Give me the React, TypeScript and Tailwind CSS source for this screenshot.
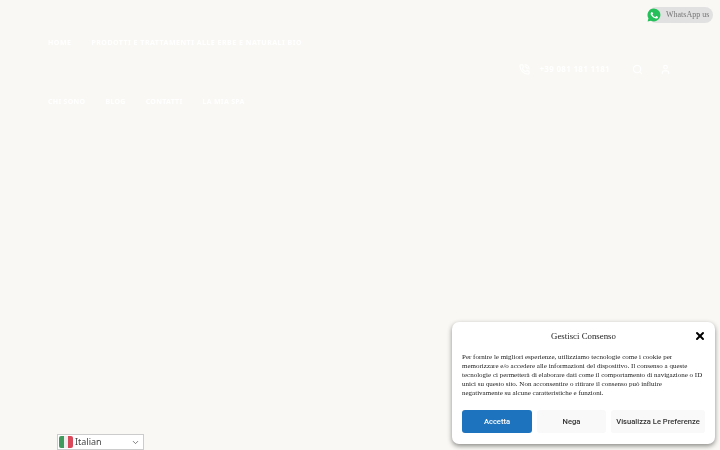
import React from 'react';
import { X, ChevronDown, Search, User, PhoneCall } from 'lucide-react';

const serif = "[font-family:'Liberation_Serif',serif]";

function WhatsAppIcon() {
  return (
    <svg viewBox="0 0 24 24" className="w-[16px] h-[16px]" fill="#fff">
      <path d="M12 2.2a9.7 9.7 0 0 0-8.3 14.7L2.4 21.800l5-1.300A9.700 9.700 0 1 0 12 2.200z" fill="#25c05a" />
      <path d="M8.700 6.900c-.3 0-.7.100-1 .5-.4.400-1.200 1.200-1.200 2.800s1.200 3.200 1.400 3.400c.2.200 2.300 3.700 5.800 5 2.900 1.100 3.400.9 4.100.8.600-.1 2-.8 2.300-1.600.3-.8.300-1.400.2-1.600-.1-.1-.3-.2-.7-.4l-2.300-1.100c-.3-.1-.6-.2-.8.200l-1.100 1.400c-.2.200-.4.300-.8.100-.4-.2-1.500-.6-2.800-1.800-1-.9-1.700-2-1.900-2.400-.2-.4 0-.6.200-.8l.6-.7c.2-.2.200-.4.400-.6.100-.2.100-.5 0-.7L9.600 7.500c-.3-.6-.6-.6-.9-.6z" transform="translate(1.800 1.800) scale(.8)" />
    </svg>
  );
}

function ItalianFlag() {
  return (
    <span className="flex w-[14px] h-[12px] overflow-hidden rounded-[2px]">
      <span className="flex-1 bg-[#3f9a5c]" />
      <span className="flex-1 bg-[#eeeeee]" />
      <span className="flex-1 bg-[#d9495a]" />
    </span>
  );
}

export default function App() {
  return (
    <div className="relative w-[720px] h-[450px] overflow-hidden bg-[#f9f8f4] blur-[0.35px] font-['Liberation_Sans',sans-serif]">
      {/* header, white on cream like the original */}
      <header className="flex flex-col pl-[48px] pr-[49px] pt-[38px] text-white">
        <nav className="flex gap-[20px] text-[7px] font-bold tracking-[0.5px] leading-[9px] [font-family:'Noto_Sans',sans-serif]">
          <a>HOME</a>
          <a>PRODOTTI E TRATTAMENTI ALLE ERBE E NATURALI BIO</a>
        </nav>
        <div className="flex items-center justify-end mt-[15px] h-[14px]">
          <PhoneCall className="w-[11px] h-[11px]" strokeWidth={2.5} />
          <span className="ml-[9px] text-[8px] font-bold tracking-[0.3px] [font-family:'Noto_Sans',sans-serif]">+39 081 181 1181</span>
          <Search className="ml-[22px] w-[11px] h-[11px]" strokeWidth={2.5} />
          <User className="ml-[17px] w-[11px] h-[11px]" strokeWidth={2.5} />
        </div>
        <nav className="flex gap-[20px] mt-[21px] text-[7px] font-bold tracking-[0.3px] leading-[9px] [font-family:'Noto_Sans',sans-serif]">
          <a>CHI SONO</a>
          <a>BLOG</a>
          <a>CONTATTI</a>
          <a>LA MIA SPA</a>
        </nav>
      </header>

      {/* whatsapp pill */}
      <div className="absolute top-[7px] left-[648px] flex items-center h-[16px] w-[65px] pl-[18px] rounded-full bg-[#e1e1e1]">
        <span className={`${serif} text-[8px] text-[#777777] whitespace-nowrap`}>WhatsApp us</span>
      </div>
      <div className="absolute top-[7px] left-[646px]">
        <WhatsAppIcon />
      </div>

      {/* language select */}
      <div className="absolute left-[57px] top-[434px] w-[87px] h-[16px] flex items-center bg-white border border-[#cccccc] pl-[1px] pr-[3px]">
        <ItalianFlag />
        <span className="ml-[2px] text-[9px] text-[#444444] [font-family:'Noto_Sans',sans-serif]">Italian</span>
        <ChevronDown className="ml-auto w-[9px] h-[9px] text-[#555555]" />
      </div>

      {/* consent dialog */}
      <div className="absolute left-[452px] top-[322px] w-[263px] h-[122px] bg-white rounded-[7px] shadow-[0_2px_5px_rgba(0,0,0,0.45)] px-[10px]">
        <div className="relative flex justify-center pt-[9px]">
          <h2 className={`${serif} text-[8.800px] leading-[11px] text-[#222222]`}>Gestisci Consenso</h2>
          <X className="absolute right-[-1px] top-[8px] w-[12px] h-[12px] text-black" strokeWidth={4} />
        </div>
        <p className={`${serif} mt-[11px] text-[7px] leading-[9px] text-[#222222]`}>
          Per fornire le migliori esperienze, utilizziamo tecnologie come i cookie per<br />
          memorizzare e/o accedere alle informazioni del dispositivo. Il consenso a queste<br />
          tecnologie ci permetterà di elaborare dati come il comportamento di navigazione o ID<br />
          unici su questo sito. Non acconsentire o ritirare il consenso può influire<br />
          negativamente su alcune caratteristiche e funzioni.
        </p>
        <div className="flex gap-[5px] mt-[12px] text-[7.600px] font-medium [font-family:Roboto,sans-serif]">
          <button className="w-[70px] h-[23px] rounded-[3px] bg-[#1e73be] text-white">Accetta</button>
          <button className="w-[69px] h-[23px] rounded-[3px] bg-[#f9f9f9] text-[#333333]">Nega</button>
          <button className="w-[94px] h-[23px] rounded-[3px] bg-[#f9f9f9] text-[#333333] whitespace-nowrap">Visualizza Le Preferenze</button>
        </div>
      </div>
    </div>
  );
}
